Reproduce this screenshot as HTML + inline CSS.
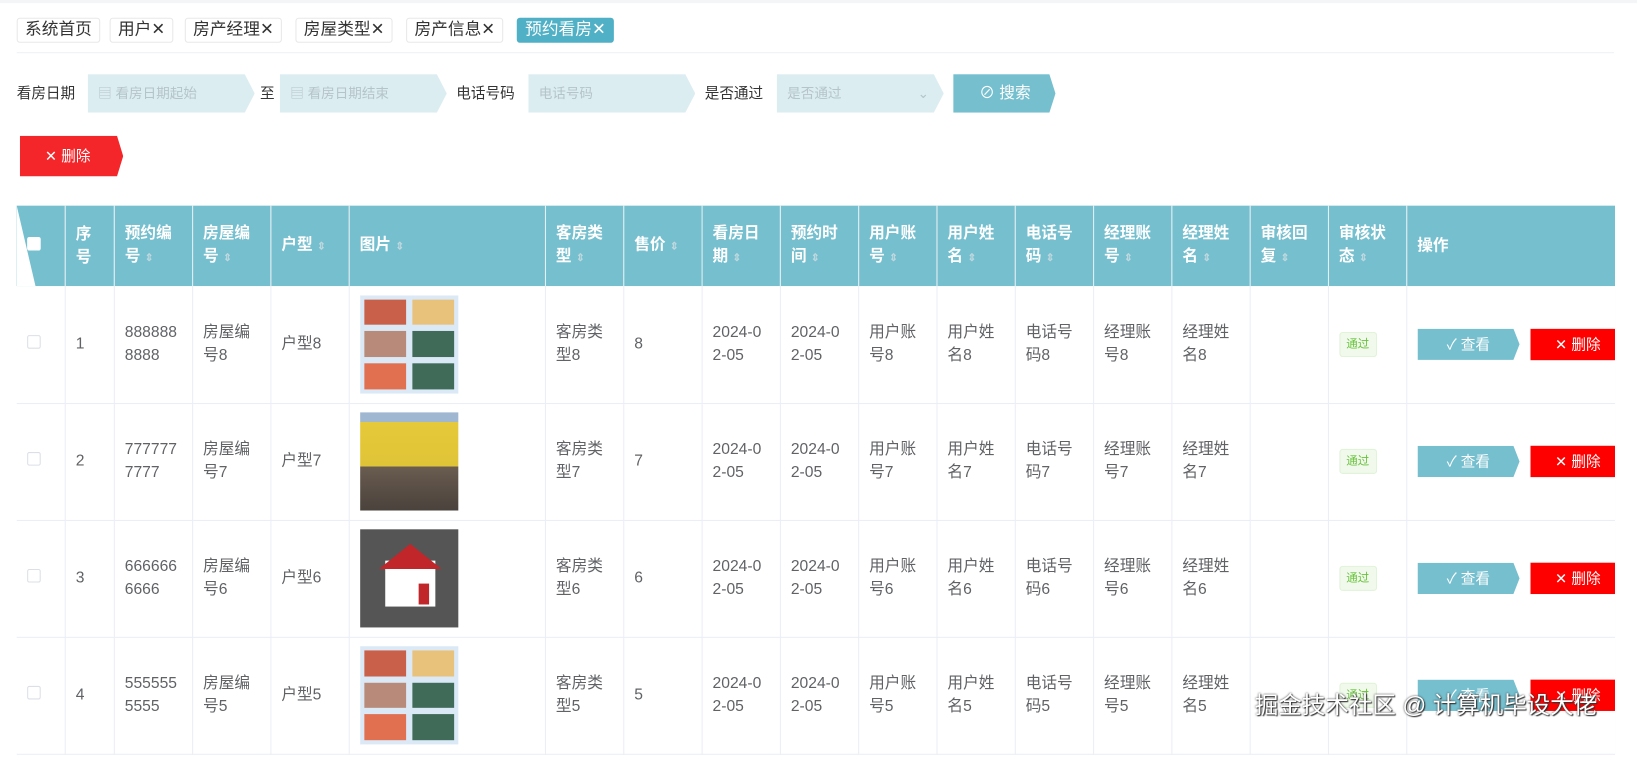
<!DOCTYPE html>
<html><head><meta charset="utf-8"><style>
*{box-sizing:border-box;margin:0;padding:0}
body{width:1637px;height:739px;overflow:hidden;background:#fff;font-family:"Liberation Sans","Noto Sans CJK SC",sans-serif;color:#606266;position:relative}
#w{position:absolute;left:0;top:0;width:1568px;height:708px;transform:scale(1.044);transform-origin:0 0}
.abs{position:absolute}
.tag{position:absolute;top:17px;height:24px;border:1px solid #e8e8e8;border-radius:3px;font-size:16px;line-height:22px;padding:0 7px;color:#333;background:#fff}
.tag.on{background:#4fb0c6;color:#fff;border-color:#4fb0c6}
.lbl{position:absolute;top:79px;font-size:14px;color:#333}
.inp{position:absolute;top:71px;height:37px;background:#dcedf2;clip-path:polygon(0 0,94% 0,100% 50%,94% 100%,0 100%);font-size:13px;color:#b4c4c8;line-height:37px;padding-left:10px}
table{position:absolute;left:16px;top:197px;border-collapse:collapse;table-layout:fixed;width:1531px}
th{background:#75bfcf;color:#fff;font-weight:bold;font-size:15px;text-align:left;padding:0 10px;height:77px;border-right:1px solid #e6f0f3;line-height:22px;word-break:break-all}
td{height:112px;font-size:15px;line-height:22px;padding:0 10px;border-right:1px solid #ebeef5;border-bottom:1px solid #ebeef5;vertical-align:middle;word-break:break-all}
.s{color:#c0d8de;font-size:10px}
.cb{display:inline-block;width:13px;height:13px;border:1px solid #dcdfe6;border-radius:2px;background:#fff}
.pic{width:94px;height:94px}
.pass{display:inline-block;font-size:11px;color:#67c23a;background:#f0f9eb;border:1px solid #e1f3d8;border-radius:3px;padding:0 6px;line-height:22px}
td.op{white-space:nowrap;overflow:hidden;padding:0 0 0 10px}
.vb{display:inline-block;width:98px;height:30px;background:#75bfcf;color:#fff;font-size:14px;line-height:30px;text-align:center;clip-path:polygon(0 0,94% 0,100% 50%,94% 100%,0 100%);vertical-align:middle}
.db{display:inline-block;width:90px;height:30px;background:#ff0000;color:#fff;font-size:14px;line-height:30px;text-align:left;padding-left:24px;margin-left:10px;vertical-align:middle}
</style></head><body>
<div id="w">
<div class="abs" style="left:0;top:0;width:1568px;height:3px;background:#f3f5f7"></div>
<div class="tag" style="left:16px">系统首页</div>
<div class="tag" style="left:105px">用户✕</div>
<div class="tag" style="left:177px">房产经理✕</div>
<div class="tag" style="left:283px">房屋类型✕</div>
<div class="tag" style="left:389px">房产信息✕</div>
<div class="tag on" style="left:495px">预约看房✕</div>
<div class="abs" style="left:16px;top:50px;width:1530px;height:1px;background:#eef0f3"></div>

<div class="lbl" style="left:16px">看房日期</div>
<div class="inp" style="left:84px;width:160px">▤ 看房日期起始</div>
<div class="lbl" style="left:249px">至</div>
<div class="inp" style="left:268px;width:160px">▤ 看房日期结束</div>
<div class="lbl" style="left:437px">电话号码</div>
<div class="inp" style="left:506px;width:160px">电话号码</div>
<div class="lbl" style="left:675px">是否通过</div>
<div class="inp" style="left:744px;width:160px">是否通过<span style="position:absolute;left:135px">⌄</span></div>
<div class="abs" style="left:913px;top:71px;width:98px;height:37px;background:#75bfcf;color:#fff;font-size:15px;line-height:37px;padding-left:25px;clip-path:polygon(0 0,94% 0,100% 50%,94% 100%,0 100%)">⊘ 搜索</div>
<div class="abs" style="left:19px;top:130px;width:99px;height:39px;background:#f5262a;color:#fff;font-size:14px;line-height:39px;padding-left:24px;clip-path:polygon(0 0,94% 0,100% 50%,94% 100%,0 100%)">✕ 删除</div>

<div class="abs" style="left:16px;top:197px;width:18px;height:77px;background:#fff;z-index:2;clip-path:polygon(0 0,0 100%,100% 100%)"></div>
<table>
<colgroup><col style="width:46px"><col style="width:47px"><col style="width:75px"><col style="width:75px"><col style="width:75px"><col style="width:188px"><col style="width:75px"><col style="width:75px"><col style="width:75px"><col style="width:75px"><col style="width:75px"><col style="width:75px"><col style="width:75px"><col style="width:75px"><col style="width:75px"><col style="width:75px"><col style="width:75px"><col style="width:200px"></colgroup>
<tr><th><span class="cb" style="border:none;margin-left:0"></span></th><th>序号</th><th>预约编号 <span class="s">⇕</span></th><th>房屋编号 <span class="s">⇕</span></th><th>户型 <span class="s">⇕</span></th><th>图片 <span class="s">⇕</span></th><th>客房类型 <span class="s">⇕</span></th><th>售价 <span class="s">⇕</span></th><th>看房日期 <span class="s">⇕</span></th><th>预约时间 <span class="s">⇕</span></th><th>用户账号 <span class="s">⇕</span></th><th>用户姓名 <span class="s">⇕</span></th><th>电话号码 <span class="s">⇕</span></th><th>经理账号 <span class="s">⇕</span></th><th>经理姓名 <span class="s">⇕</span></th><th>审核回复 <span class="s">⇕</span></th><th>审核状态 <span class="s">⇕</span></th><th>操作</th></tr>

<tr><td><span class="cb"></span></td><td>1</td><td>8888888888</td><td>房屋编号8</td><td>户型8</td><td><div class="pic" style="background:#dbe9f7;display:grid;grid-template-columns:1fr 1fr;gap:6px;padding:4px"><div style="background:#c8604a"></div><div style="background:#e8c27a"></div><div style="background:#b88a7a"></div><div style="background:#3f6b58"></div><div style="background:#e0704f"></div><div style="background:#3f6b58"></div></div></td><td>客房类型8</td><td>8</td><td>2024-02-05</td><td>2024-02-05</td><td>用户账号8</td><td>用户姓名8</td><td>电话号码8</td><td>经理账号8</td><td>经理姓名8</td><td></td><td><span class="pass">通过</span></td><td class="op"><span class="vb">✓ 查看</span><span class="db">✕ 删除</span></td></tr>

<tr><td><span class="cb"></span></td><td>2</td><td>7777777777</td><td>房屋编号7</td><td>户型7</td><td><div class="pic" style="background:linear-gradient(#9fb7d0 0,#9fb7d0 10%,#e6c93a 10%,#e0c437 55%,#6a5c50 55%,#4a423c 100%)"></div></td><td>客房类型7</td><td>7</td><td>2024-02-05</td><td>2024-02-05</td><td>用户账号7</td><td>用户姓名7</td><td>电话号码7</td><td>经理账号7</td><td>经理姓名7</td><td></td><td><span class="pass">通过</span></td><td class="op"><span class="vb">✓ 查看</span><span class="db">✕ 删除</span></td></tr>

<tr><td><span class="cb"></span></td><td>3</td><td>6666666666</td><td>房屋编号6</td><td>户型6</td><td><div class="pic" style="background:#555;position:relative"><div style="position:absolute;left:24px;top:30px;width:48px;height:44px;background:#fff"></div><div style="position:absolute;left:18px;top:14px;width:0;height:0;border-left:30px solid transparent;border-right:30px solid transparent;border-bottom:24px solid #c0262a"></div><div style="position:absolute;left:56px;top:52px;width:10px;height:20px;background:#c0262a"></div></div></td><td>客房类型6</td><td>6</td><td>2024-02-05</td><td>2024-02-05</td><td>用户账号6</td><td>用户姓名6</td><td>电话号码6</td><td>经理账号6</td><td>经理姓名6</td><td></td><td><span class="pass">通过</span></td><td class="op"><span class="vb">✓ 查看</span><span class="db">✕ 删除</span></td></tr>

<tr><td><span class="cb"></span></td><td>4</td><td>5555555555</td><td>房屋编号5</td><td>户型5</td><td><div class="pic" style="background:#dbe9f7;display:grid;grid-template-columns:1fr 1fr;gap:6px;padding:4px"><div style="background:#c8604a"></div><div style="background:#e8c27a"></div><div style="background:#b88a7a"></div><div style="background:#3f6b58"></div><div style="background:#e0704f"></div><div style="background:#3f6b58"></div></div></td><td>客房类型5</td><td>5</td><td>2024-02-05</td><td>2024-02-05</td><td>用户账号5</td><td>用户姓名5</td><td>电话号码5</td><td>经理账号5</td><td>经理姓名5</td><td></td><td><span class="pass">通过</span></td><td class="op"><span class="vb">✓ 查看</span><span class="db">✕ 删除</span></td></tr>
</table>
<div class="abs" style="left:1547px;top:190px;width:90px;height:549px;background:#fff;z-index:3"></div>
<div class="abs" style="left:1202px;top:658px;font-size:22.5px;color:#fff;z-index:4;text-shadow:0 0 2px #333,1px 1px 1px #333;white-space:nowrap">掘金技术社区 @ 计算机毕设大佬</div>
</div>
</body></html>
